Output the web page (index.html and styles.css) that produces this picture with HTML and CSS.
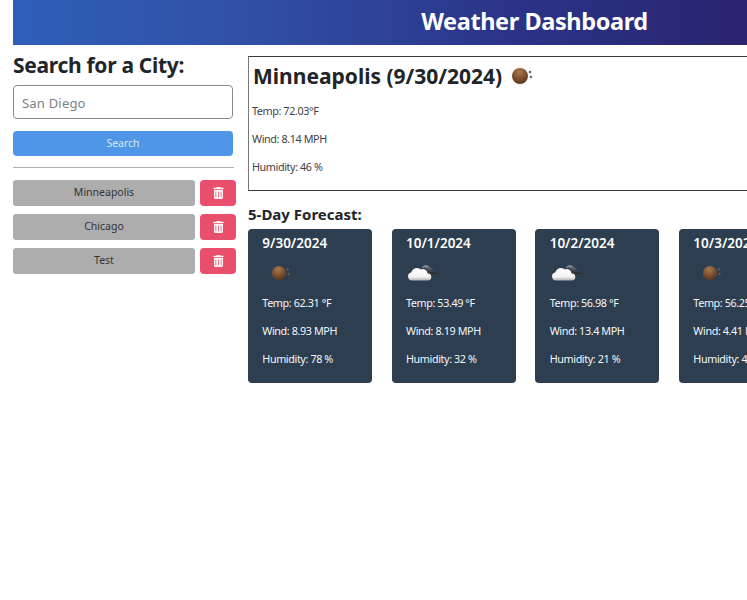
FILE: index.html
```html
<!DOCTYPE html>
<html lang="en">
<head>
    <meta charset="UTF-8">
    <meta name="viewport" content="width=device-width, initial-scale=1.0">
    <title>Weather Dashboard</title>
    <link rel="stylesheet" href="styles.css">
</head>
<body>
    <svg class="defs" width="0" height="0">
        <defs>
            <radialGradient id="ballFill" cx="0.45" cy="0.25" r="0.85">
                <stop offset="0" stop-color="#a8794f"/>
                <stop offset="0.6" stop-color="#75492a"/>
                <stop offset="1" stop-color="#4f3019"/>
            </radialGradient>
            <linearGradient id="cloudFill" x1="0" y1="0" x2="0" y2="1">
                <stop offset="0" stop-color="#ffffff"/>
                <stop offset="0.7" stop-color="#f4f4f4"/>
                <stop offset="1" stop-color="#b0b0b0"/>
            </linearGradient>
            <linearGradient id="darkFill" x1="0" y1="0" x2="0" y2="1">
                <stop offset="0" stop-color="#9a9da1"/>
                <stop offset="0.4" stop-color="#55585d"/>
                <stop offset="1" stop-color="#25272b"/>
            </linearGradient>
            <symbol id="ball" viewBox="0 0 24 18">
                <circle cx="9" cy="9" r="8" fill="url(#ballFill)"/>
                <circle cx="19" cy="5" r="1.3" fill="#75604f"/>
                <circle cx="20" cy="10" r="1.2" fill="#75604f"/>
            </symbol>
            <symbol id="cloud" viewBox="0 0 30 16">
                <path d="M13 4a5 5 0 0 1 9-1.500c2 .5 3 1.500 3.500 3 2 0 3.500 1 4 3.500H21a5 5 0 0 0-8-5z" fill="url(#darkFill)"/>
                <path d="M4 15.500a4 4 0 0 1-.8-7.900A6 6 0 0 1 13 4.500a4.500 4.500 0 0 1 6.500 4A3.500 3.500 0 0 1 20 15.500z" fill="url(#cloudFill)"/>
            </symbol>
            <symbol id="trash" viewBox="0 0 448 512">
                <path fill="currentColor" d="M135 18c5-11 16-18 29-18h120c12 0 24 7 29 18l7 14h96c18 0 32 14 32 32s-14 32-32 32H32C14 96 0 82 0 64s14-32 32-32h96zM32 128h384v320c0 35-29 64-64 64H96c-35 0-64-29-64-64zm80 64c-9 0-16 7-16 16v224c0 9 7 16 16 16s16-7 16-16V208c0-9-7-16-16-16zm112 0c-9 0-16 7-16 16v224c0 9 7 16 16 16s16-7 16-16V208c0-9-7-16-16-16zm112 0c-9 0-16 7-16 16v224c0 9 7 16 16 16s16-7 16-16V208c0-9-7-16-16-16z"/>
            </symbol>
        </defs>
    </svg>

    <div class="page">
        <header class="banner">
            <h1>Weather Dashboard</h1>
        </header>

        <div class="layout">
            <aside class="sidebar">
                <h2 class="search-title">Search for a City:</h2>
                <input class="city-input" type="text" placeholder="San Diego">
                <button class="search-btn">Search</button>
                <hr class="divider">
                <div class="history">
                    <div class="history-row">
                        <button class="city-btn">Minneapolis</button>
                        <button class="delete-btn"><svg class="trash-icon"><use href="#trash"/></svg></button>
                    </div>
                    <div class="history-row">
                        <button class="city-btn">Chicago</button>
                        <button class="delete-btn"><svg class="trash-icon"><use href="#trash"/></svg></button>
                    </div>
                    <div class="history-row">
                        <button class="city-btn">Test</button>
                        <button class="delete-btn"><svg class="trash-icon"><use href="#trash"/></svg></button>
                    </div>
                </div>
            </aside>

            <main class="content">
                <section class="current">
                    <h2 class="current-title">Minneapolis (9/30/2024) <svg class="current-icon"><use href="#ball"/></svg></h2>
                    <p>Temp: 72.03°F</p>
                    <p>Wind: 8.14 MPH</p>
                    <p>Humidity: 46 %</p>
                </section>

                <h3 class="forecast-title">5-Day Forecast:</h3>
                <div class="forecast">
                    <div class="card">
                        <h4>9/30/2024</h4>
                        <div class="card-icon"><svg class="icon-ball"><use href="#ball"/></svg></div>
                        <p>Temp: 62.31 °F</p>
                        <p>Wind: 8.93 MPH</p>
                        <p>Humidity: 78 %</p>
                    </div>
                    <div class="card">
                        <h4>10/1/2024</h4>
                        <div class="card-icon"><svg class="icon-cloud"><use href="#cloud"/></svg></div>
                        <p>Temp: 53.49 °F</p>
                        <p>Wind: 8.19 MPH</p>
                        <p>Humidity: 32 %</p>
                    </div>
                    <div class="card">
                        <h4>10/2/2024</h4>
                        <div class="card-icon"><svg class="icon-cloud"><use href="#cloud"/></svg></div>
                        <p>Temp: 56.98 °F</p>
                        <p>Wind: 13.4 MPH</p>
                        <p>Humidity: 21 %</p>
                    </div>
                    <div class="card">
                        <h4>10/3/2024</h4>
                        <div class="card-icon"><svg class="icon-ball"><use href="#ball"/></svg></div>
                        <p>Temp: 56.25 °F</p>
                        <p>Wind: 4.41 MPH</p>
                        <p>Humidity: 45 %</p>
                    </div>
                </div>
            </main>
        </div>
    </div>
</body>
</html>
```

FILE: styles.css
```css
html, body {
    overflow: hidden;
}
body {
    margin: 0;
    height: 600px;
    font-family: "Noto Sans", "Open Sans", sans-serif;
    background-color: #ffffff;
    color: #212529;
}
.defs {
    position: absolute;
}
.page {
    width: 1043px;
    margin-left: 13px;
}
.banner {
    height: 45px;
    display: flex;
    justify-content: center;
    background: linear-gradient(90deg, #2f5fb8 0, #3050a5 240px, #2b3488 490px, #29246f 734px);
}
.banner h1 {
    margin: 0;
    font-size: 23.5px;
    letter-spacing: -0.4px;
    line-height: 42px;
    font-weight: 700;
    color: #ffffff;
}
.layout {
    display: flex;
    gap: 12px;
    padding-top: 6px;
}
.sidebar {
    width: 223px;
    flex: none;
}
.search-title {
    margin: 0 0 5px;
    font-size: 21px;
    letter-spacing: -0.3px;
    line-height: 29px;
    font-weight: 700;
}
.city-input {
    display: block;
    width: 220px;
    height: 34px;
    padding: 2px 8px 0;
    box-sizing: border-box;
    border: 1px solid #8a8a8a;
    border-radius: 4px;
    font-family: inherit;
    font-size: 13px;
    letter-spacing: 0.2px;
}
.city-input::placeholder {
    color: #7a8087;
}
.search-btn {
    display: block;
    width: 220px;
    height: 25px;
    margin-top: 12px;
    padding: 0 0 1px;
    border: none;
    border-radius: 4px;
    background-color: #4f97e6;
    color: #d6e6f7;
    font-family: inherit;
    font-size: 10.5px;
}
.divider {
    width: 221px;
    margin: 11px 0 12px;
    border: none;
    border-top: 1px solid #b0b0b0;
}
.history {
    display: flex;
    flex-direction: column;
    gap: 8px;
}
.history-row {
    display: flex;
    gap: 5px;
}
.city-btn {
    width: 182px;
    height: 26px;
    padding: 0 0 2px;
    border: none;
    border-radius: 3px;
    background-color: #adadad;
    color: #333333;
    font-family: inherit;
    font-size: 10.5px;
}
.delete-btn {
    width: 36px;
    height: 26px;
    display: flex;
    align-items: center;
    justify-content: center;
    padding: 0;
    border: none;
    border-radius: 4px;
    background-color: #e94f6d;
    color: #fff6f8;
}
.trash-icon {
    width: 11px;
    height: 12px;
}
.content {
    flex: 1;
    min-width: 0;
    padding-top: 5px;
}
.current {
    height: 135px;
    box-sizing: border-box;
    padding: 4px 3px;
    border: 1px solid #3a3a3a;
    border-left-color: #777777;
}
.current-title {
    margin: 0 0 12px;
    padding-left: 1px;
    font-size: 21px;
    line-height: 30px;
    font-weight: 700;
}
.current-icon {
    width: 24px;
    height: 18px;
    margin-left: 3px;
    vertical-align: -1px;
}
.current p, .card p {
    margin: 0 0 12px;
    font-size: 10.8px;
    letter-spacing: -0.4px;
    line-height: 16px;
}
.current p {
    color: #3d4247;
}
.forecast-title {
    margin: 12px 0 4px;
    font-size: 15px;
    line-height: 22px;
    font-weight: 700;
}
.forecast {
    display: flex;
    gap: 19.7px;
}
.card {
    width: 124px;
    height: 154px;
    flex: none;
    box-sizing: border-box;
    padding: 4px 14.3px;
    border-radius: 4px;
    background-color: #2c3e50;
    color: #f5f7f9;
}
.card h4 {
    margin: 0;
    font-size: 13.5px;
    line-height: 20px;
    font-weight: 600;
    color: #ffffff;
    white-space: nowrap;
}
.card-icon {
    height: 39px;
    margin-bottom: 3px;
    display: flex;
    align-items: center;
}
.icon-ball {
    width: 21px;
    height: 16px;
    margin-left: 9px;
}
.icon-cloud {
    width: 30px;
    height: 16px;
    margin-left: 2px;
}
.card p {
    white-space: nowrap;
}
```
